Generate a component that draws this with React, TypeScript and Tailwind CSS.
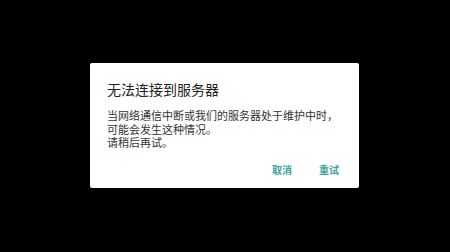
export default function App() {
  const cjk = { fontFamily: '"Noto Sans CJK SC", "Noto Sans", sans-serif' }
  return (
    <div className="w-[450px] h-[252px] bg-black pt-[63px] pl-[90px]" style={cjk}>
      {/* Dialog */}
      <div className="w-[269px] h-[125px] bg-white rounded-[2px] flex flex-col">
        <div className="pl-[17px] pt-[16px] text-[14px] leading-[20px] text-[#212121]">无法连接到服务器</div>
        <div className="pl-[17px] pt-[10px] flex flex-col text-[11px] leading-[13.5px] text-[#333333]">
          <p>当网络通信中断或我们的服务器处于维护中时，</p>
          <p>可能会发生这种情况。</p>
          <p>请稍后再试。</p>
        </div>
        <div className="flex justify-end gap-[27px] pr-[20px] pt-[13px] text-[10px] leading-[14px] font-bold text-[#3aa69a]">
          <button>取消</button>
          <button>重试</button>
        </div>
      </div>
    </div>
  )
}
